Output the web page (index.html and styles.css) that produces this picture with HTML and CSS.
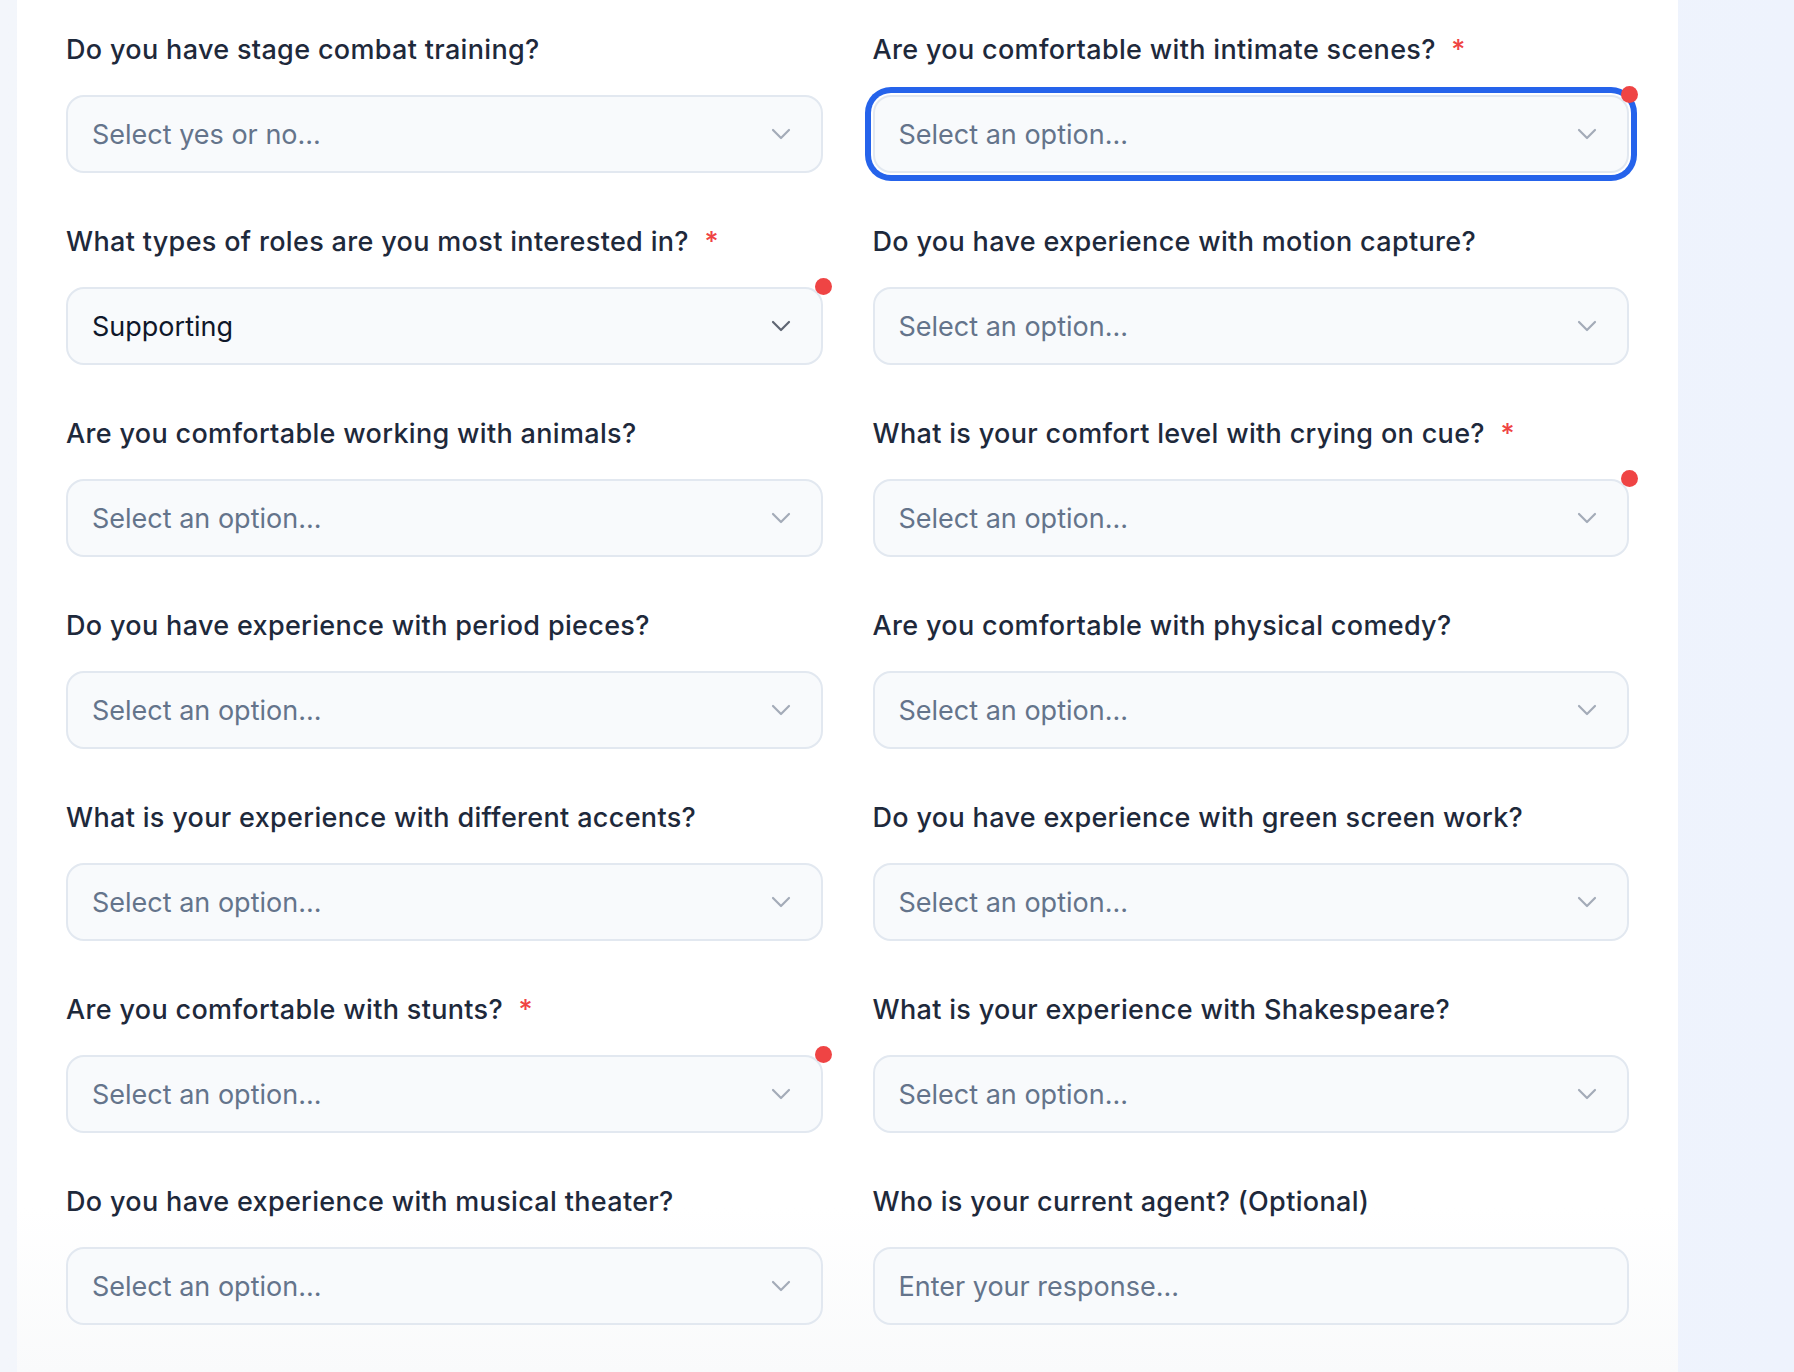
FILE: index.html
```html
<!DOCTYPE html>
<html lang="en">
<head>
<meta charset="utf-8">
<title>Casting questionnaire</title>
<link rel="stylesheet" href="styles.css">
</head>
<body>
<div class="page">
  <main class="card">
    <form class="grid">
      <div class="field">
        <label class="label">Do you have stage combat training?</label>
        <div class="select">
          <span class="placeholder">Select yes or no...</span>
          <svg class="chev" viewBox="0 0 20 12" width="20" height="12"><polyline points="2,2 10,10 18,2"/></svg>
        </div>
      </div>
      <div class="field">
        <label class="label">Are you comfortable with intimate scenes? <span class="req">*</span></label>
        <div class="select focused">
          <span class="placeholder">Select an option...</span>
          <svg class="chev" viewBox="0 0 20 12" width="20" height="12"><polyline points="2,2 10,10 18,2"/></svg>
          <span class="dot"></span>
        </div>
      </div>

      <div class="field">
        <label class="label">What types of roles are you most interested in? <span class="req">*</span></label>
        <div class="select">
          <span class="value">Supporting</span>
          <svg class="chev dark" viewBox="0 0 20 12" width="20" height="12"><polyline points="2,2 10,10 18,2"/></svg>
          <span class="dot"></span>
        </div>
      </div>
      <div class="field">
        <label class="label">Do you have experience with motion capture?</label>
        <div class="select">
          <span class="placeholder">Select an option...</span>
          <svg class="chev" viewBox="0 0 20 12" width="20" height="12"><polyline points="2,2 10,10 18,2"/></svg>
        </div>
      </div>

      <div class="field">
        <label class="label">Are you comfortable working with animals?</label>
        <div class="select">
          <span class="placeholder">Select an option...</span>
          <svg class="chev" viewBox="0 0 20 12" width="20" height="12"><polyline points="2,2 10,10 18,2"/></svg>
        </div>
      </div>
      <div class="field">
        <label class="label">What is your comfort level with crying on cue? <span class="req">*</span></label>
        <div class="select">
          <span class="placeholder">Select an option...</span>
          <svg class="chev" viewBox="0 0 20 12" width="20" height="12"><polyline points="2,2 10,10 18,2"/></svg>
          <span class="dot"></span>
        </div>
      </div>

      <div class="field">
        <label class="label">Do you have experience with period pieces?</label>
        <div class="select">
          <span class="placeholder">Select an option...</span>
          <svg class="chev" viewBox="0 0 20 12" width="20" height="12"><polyline points="2,2 10,10 18,2"/></svg>
        </div>
      </div>
      <div class="field">
        <label class="label">Are you comfortable with physical comedy?</label>
        <div class="select">
          <span class="placeholder">Select an option...</span>
          <svg class="chev" viewBox="0 0 20 12" width="20" height="12"><polyline points="2,2 10,10 18,2"/></svg>
        </div>
      </div>

      <div class="field">
        <label class="label">What is your experience with different accents?</label>
        <div class="select">
          <span class="placeholder">Select an option...</span>
          <svg class="chev" viewBox="0 0 20 12" width="20" height="12"><polyline points="2,2 10,10 18,2"/></svg>
        </div>
      </div>
      <div class="field">
        <label class="label">Do you have experience with green screen work?</label>
        <div class="select">
          <span class="placeholder">Select an option...</span>
          <svg class="chev" viewBox="0 0 20 12" width="20" height="12"><polyline points="2,2 10,10 18,2"/></svg>
        </div>
      </div>

      <div class="field">
        <label class="label">Are you comfortable with stunts? <span class="req">*</span></label>
        <div class="select">
          <span class="placeholder">Select an option...</span>
          <svg class="chev" viewBox="0 0 20 12" width="20" height="12"><polyline points="2,2 10,10 18,2"/></svg>
          <span class="dot"></span>
        </div>
      </div>
      <div class="field">
        <label class="label">What is your experience with Shakespeare?</label>
        <div class="select">
          <span class="placeholder">Select an option...</span>
          <svg class="chev" viewBox="0 0 20 12" width="20" height="12"><polyline points="2,2 10,10 18,2"/></svg>
        </div>
      </div>

      <div class="field">
        <label class="label">Do you have experience with musical theater?</label>
        <div class="select">
          <span class="placeholder">Select an option...</span>
          <svg class="chev" viewBox="0 0 20 12" width="20" height="12"><polyline points="2,2 10,10 18,2"/></svg>
        </div>
      </div>
      <div class="field">
        <label class="label">Who is your current agent? (Optional)</label>
        <input class="input" type="text" placeholder="Enter your response...">
      </div>
    </form>
  </main>
</div>
</body>
</html>
```

FILE: styles.css
```css
* { box-sizing: border-box; }

html, body {
  margin: 0;
  height: 100%;
}

body {
  font-family: Inter, "Noto Sans", "Liberation Sans", sans-serif;
  background: linear-gradient(90deg, #f3f6fb 0%, #eef3fd 100%);
  color: #1e293b;
  overflow: hidden;
}

.page {
  padding-left: 17px;
  height: 100%;
}

.card {
  width: 1661px;
  min-height: 100%;
  background: linear-gradient(180deg, #ffffff 0%, #ffffff 88%, #f9fafb 100%);
  padding: 32px 49px 40px;
}

.grid {
  display: grid;
  grid-template-columns: 1fr 1fr;
  column-gap: 50px;
  row-gap: 51px;
}

.field {
  display: flex;
  flex-direction: column;
}

.label {
  font-size: 27px;
  line-height: 36px;
  font-weight: 500;
  letter-spacing: 0.33px;
  color: #1e293b;
  margin-bottom: 27px;
}

.req {
  color: #ef4444;
  margin-left: 8px;
}

.select,
.input {
  position: relative;
  height: 78px;
  border: 2px solid #e2e8f0;
  border-radius: 18px;
  background: #f8fafc;
  display: flex;
  align-items: center;
  justify-content: space-between;
  padding: 0 30px 0 24px;
  font-size: 27px;
}

.input {
  width: 100%;
  font-family: inherit;
  color: #1e293b;
  outline: none;
}

.input::placeholder { color: #64748b; }

.placeholder { color: #64748b; }

.value { color: #0f172a; }

.chev {
  fill: none;
  stroke: #a3abb8;
  stroke-width: 2.2;
  stroke-linecap: round;
  stroke-linejoin: round;
}

.chev.dark { stroke: #5f6673; }

.focused {
  box-shadow: 0 0 0 2px #ffffff, 0 0 0 8px #2563eb;
}

.dot {
  position: absolute;
  top: -11px;
  right: -11px;
  width: 17px;
  height: 17px;
  border-radius: 50%;
  background: #ef4444;
}
```
